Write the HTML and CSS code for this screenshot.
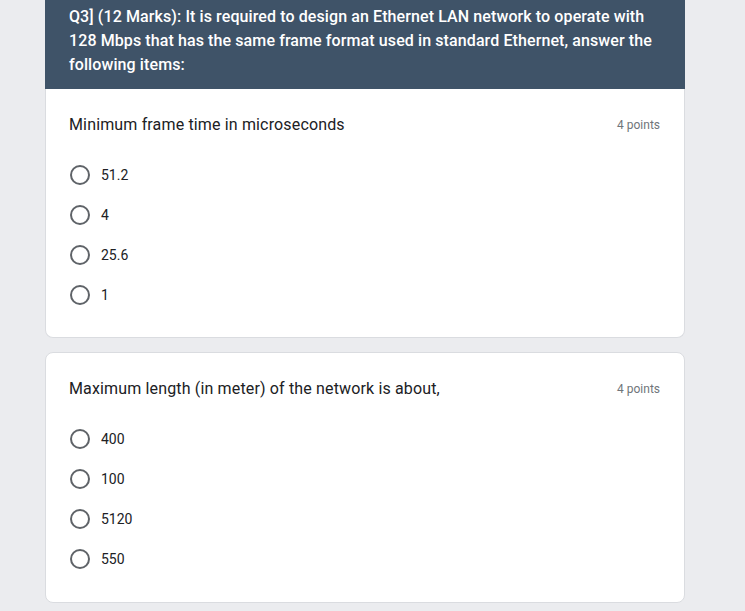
FILE: index.html
```html
<!DOCTYPE html>
<html>
<head>
<meta charset="utf-8">
<link rel="stylesheet" href="styles.css">
</head>
<body>
<div class="page">
  <section class="block">
    <div class="section-header">Q3] (12 Marks): It is required to design an Ethernet LAN network to operate with 128 Mbps that has the same frame format used in standard Ethernet, answer the following items:</div>
    <div class="card card-joined">
      <div class="q-head">
        <div class="q-title">Minimum frame time in microseconds</div>
        <div class="q-points">4 points</div>
      </div>
      <div class="options">
        <div class="option"><span class="radio"></span><span class="opt-label">51.2</span></div>
        <div class="option"><span class="radio"></span><span class="opt-label">4</span></div>
        <div class="option"><span class="radio"></span><span class="opt-label">25.6</span></div>
        <div class="option"><span class="radio"></span><span class="opt-label">1</span></div>
      </div>
    </div>
  </section>
  <div class="card">
    <div class="q-head">
      <div class="q-title">Maximum length (in meter) of the network is about,</div>
      <div class="q-points">4 points</div>
    </div>
    <div class="options">
      <div class="option"><span class="radio"></span><span class="opt-label">400</span></div>
      <div class="option"><span class="radio"></span><span class="opt-label">100</span></div>
      <div class="option"><span class="radio"></span><span class="opt-label">5120</span></div>
      <div class="option"><span class="radio"></span><span class="opt-label">550</span></div>
    </div>
  </div>
</div>
</body>
</html>
```
FILE: styles.css
```css
html, body {
  margin: 0;
  padding: 0;
  background: #ebecef;
  font-family: Roboto, "Liberation Sans", Arial, sans-serif;
}
.page {
  width: 640px;
  margin-left: 45px;
  display: flex;
  flex-direction: column;
  gap: 14px;
}
.block {
  display: flex;
  flex-direction: column;
}
.section-header {
  background: #3f5368;
  color: #ffffff;
  font-size: 16px;
  font-weight: 500;
  line-height: 24px;
  padding: 5px 20px 12px 24px;
  height: 72px;
  letter-spacing: 0.1px;
}
.card {
  background: #ffffff;
  border: 1px solid #dadce0;
  border-radius: 8px;
  padding: 24px 24px 23px 23px;
}
.card-joined {
  border-top: none;
  border-radius: 0 0 8px 8px;
  padding-bottom: 22px;
}
.q-head {
  display: flex;
  justify-content: space-between;
  align-items: center;
  height: 24px;
}
.q-title {
  font-size: 16px;
  letter-spacing: 0.15px;
  color: #202124;
  line-height: 24px;
}
.q-points {
  font-size: 12px;
  color: #70757a;
}
.options {
  margin-top: 18px;
  display: flex;
  flex-direction: column;
}
.option {
  height: 40px;
  display: flex;
  align-items: center;
}
.radio {
  box-sizing: border-box;
  width: 20px;
  height: 20px;
  border: 2px solid #5f6368;
  border-radius: 50%;
  margin-left: 1px;
  margin-right: 11px;
}
.opt-label {
  font-size: 14px;
  color: #202124;
}
```
